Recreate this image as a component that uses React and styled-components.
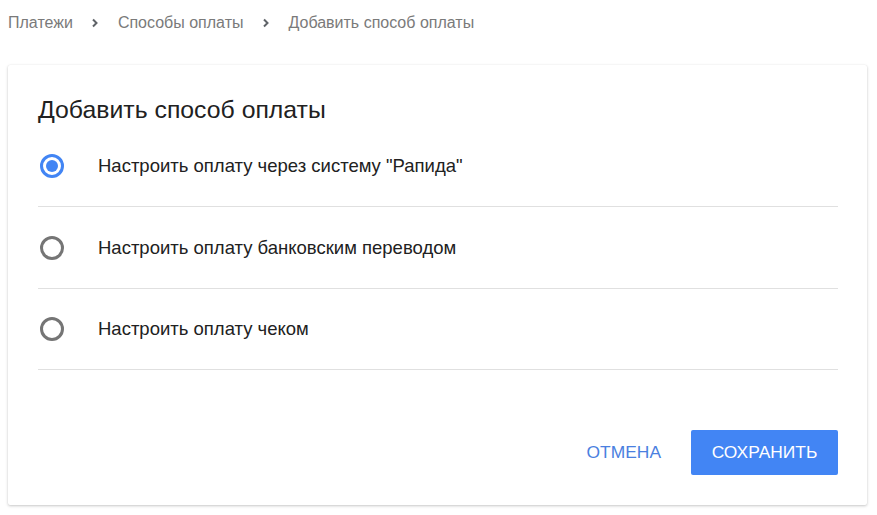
import React from 'react'
import styled, { createGlobalStyle } from 'styled-components'

const GlobalStyle = createGlobalStyle`
  body {
    margin: 0;
    background: #fff;
    font-family: "Liberation Sans", Arial, sans-serif;
  }
`

const options = [
  { id: 'rapida', label: 'Настроить оплату через систему "Рапида"' },
  { id: 'bank', label: 'Настроить оплату банковским переводом' },
  { id: 'check', label: 'Настроить оплату чеком' },
]

const Chevron = () => (
  <svg width='8' height='12' viewBox='0 0 8 12'>
    <path d='M2 2.5 L5.5 6 L2 9.5' fill='none' stroke='#5f6368' strokeWidth='2' />
  </svg>
)

const App = () => {
  const [selected, setSelected] = React.useState('rapida')

  return (
    <>
      <GlobalStyle />
      <Page>
        <Crumbs>
          <Crumb>Платежи</Crumb>
          <Chevron />
          <Crumb>Способы оплаты</Crumb>
          <Chevron />
          <Crumb>Добавить способ оплаты</Crumb>
        </Crumbs>
        <Card>
          <Title>Добавить способ оплаты</Title>
          <List>
            {options.map((el) => (
              <Row key={el.id} onClick={() => setSelected(el.id)}>
                <RadioBox>
                  <Radio checked={selected === el.id} />
                </RadioBox>
                <Label>{el.label}</Label>
              </Row>
            ))}
          </List>
          <Actions>
            <TextButton>Отмена</TextButton>
            <PrimaryButton>Сохранить</PrimaryButton>
          </Actions>
        </Card>
      </Page>
    </>
  )
}

export default App

const Page = styled.div`
  display: flex;
  flex-direction: column;
  padding: 0 10px 10px 8px;
`

const Crumbs = styled.div`
  display: flex;
  align-items: center;
  gap: 18.5px;
  height: 46px;
  margin-bottom: 19px;
`

const Crumb = styled.span`
  font-size: 16px;
  color: #7a7a7a;
`

const Card = styled.div`
  background: #fff;
  border-radius: 2px;
  box-shadow: 0 1px 3px rgba(0, 0, 0, 0.22), 0 0 1px rgba(0, 0, 0, 0.08);
  padding: 30px 29px 30px 30px;
  display: flex;
  flex-direction: column;
`

const Title = styled.h1`
  margin: 0;
  font-size: 24.8px;
  font-weight: 400;
  line-height: 30px;
  color: #212121;
`

const List = styled.div`
  display: flex;
  flex-direction: column;
`

const Row = styled.label`
  display: flex;
  align-items: center;
  height: 81px;
  border-bottom: 1px solid #e0e0e0;
  cursor: pointer;

  &:last-child {
    height: 80px;
  }
`

const RadioBox = styled.span`
  width: 28px;
  display: flex;
  justify-content: center;
  margin-right: 32px;
`

const Radio = styled.span`
  box-sizing: border-box;
  width: 24px;
  height: 24px;
  border-radius: 50%;
  border: 3px solid ${({ checked }) => (checked ? '#4285f4' : '#757575')};
  display: flex;
  align-items: center;
  justify-content: center;

  &::after {
    content: '';
    width: 12px;
    height: 12px;
    border-radius: 50%;
    background: #4285f4;
    display: ${({ checked }) => (checked ? 'block' : 'none')};
  }
`

const Label = styled.span`
  font-size: 18.5px;
  color: #212121;
`

const Actions = styled.div`
  display: flex;
  justify-content: flex-end;
  gap: 10px;
  margin-top: 60px;
`

const TextButton = styled.button`
  border: none;
  background: none;
  padding: 0 20px;
  height: 45px;
  font-family: inherit;
  font-size: 17.4px;
  text-transform: uppercase;
  color: #4a7fe0;
  cursor: pointer;
`

const PrimaryButton = styled.button`
  border: none;
  border-radius: 2px;
  background: #4285f4;
  padding: 0 20px;
  height: 45px;
  min-width: 147px;
  font-family: inherit;
  font-size: 17.4px;
  text-transform: uppercase;
  color: #fff;
  cursor: pointer;
`
